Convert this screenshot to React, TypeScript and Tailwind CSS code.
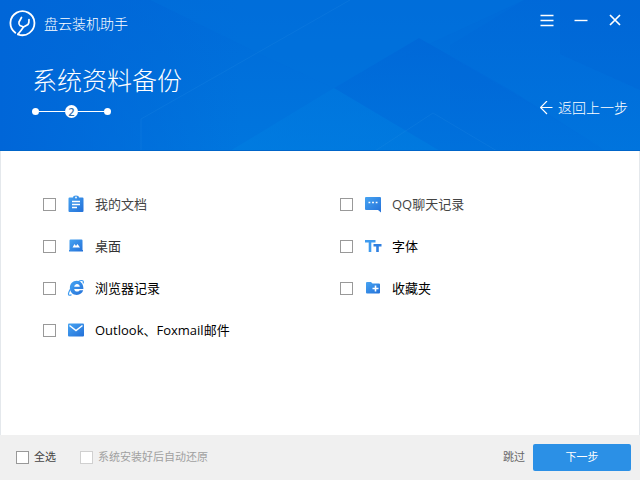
import React, { useState } from 'react';

type IconProps = { children: React.ReactNode };

const Glyph: React.FC<IconProps> = ({ children }) => (
  <svg width="18" height="18" viewBox="0 0 18 18" aria-hidden="true" className="shrink-0">
    {children}
  </svg>
);

const DocsIcon = () => (
  <Glyph>
    <path d="M2.500 2.500H6a3 2 0 0 1 6 0h3.500a1 1 0 0 1 1 1V16a1 1 0 0 1-1 1h-13a1 1 0 0 1-1-1V3.500a1 1 0 0 1 1-1z" fill="url(#blue)" />
    <circle cx="9" cy="2.500" r="0.900" fill="#fff" />
    <path d="M5 6.500h8M5 9.500h8M5 12.500h5" stroke="#fff" strokeWidth="1.500" />
  </Glyph>
);

const DesktopIcon = () => (
  <Glyph>
    <path d="M3.500 2.500h11a1 1 0 0 1 1 1V13h.5v1.500H2V13h.5V3.500a1 1 0 0 1 1-1z" fill="url(#blue)" />
    <path d="M5.500 10.500l2-3.500 1.500 2 1.500-2 2.500 3.500z" fill="#fff" />
  </Glyph>
);

const BrowserIcon = () => (
  <Glyph>
    <path d="M9.700 1.800c4 0 6.800 3 6.700 8.200H7.200c.2 1.700 1.300 2.600 3 2.600 1.200 0 2-.5 2.500-1.300h3.500c-.9 2.800-3.200 4.600-6.300 4.600-4 0-7-2.800-7-7s2.800-7.100 6.800-7.100zM7.200 7.700h5.600c-.2-1.700-1.200-2.700-2.800-2.700S7.500 6 7.200 7.700z" fill="url(#blue)" />
    <path d="M4.500 15.700c-2.800 1.300-3.700 0-2.500-3C3.400 8.700 8.500 3.400 13 1.800c3-.9 3.800.4 3.200 2.600" fill="none" stroke="#3d9bf0" strokeWidth="1.200" />
  </Glyph>
);

const MailIcon = () => (
  <Glyph>
    <rect x="1" y="2.500" width="16" height="13" rx="1" fill="url(#blue)" />
    <path d="M2.500 4.500l6.500 5 6.500-5" fill="none" stroke="#fff" strokeWidth="1.500" />
  </Glyph>
);

const ChatIcon = () => (
  <Glyph>
    <path d="M2 2h14a1 1 0 0 1 1 1v14.500L14 15H2a1 1 0 0 1-1-1V3a1 1 0 0 1 1-1z" fill="url(#blue)" />
    <path d="M4.500 7.500h1.800M8.100 7.500h1.800M11.700 7.500h1.800" stroke="#fff" strokeWidth="1.600" />
  </Glyph>
);

const FontIcon = () => (
  <Glyph>
    <path d="M1 4.200h10.500M6 4.200V15" stroke="#3f9bef" strokeWidth="2.600" />
    <path d="M9.500 8.200h8M13.500 8.200V15" stroke="#2f7fe0" strokeWidth="2.600" />
  </Glyph>
);

const FavoriteIcon = () => (
  <Glyph>
    <path d="M3 3h4l1.500 1.500H15a1 1 0 0 1 1 1v8a1 1 0 0 1-1 1H3a1 1 0 0 1-1-1V4a1 1 0 0 1 1-1z" fill="url(#blue)" />
    <path d="M11.500 6.500v6M8.500 9.500h6" stroke="#fff" strokeWidth="1.600" />
  </Glyph>
);

const items = [
  { id: 'docs', label: '我的文档', Icon: DocsIcon, color: 'text-[#444]' },
  { id: 'qq', label: 'QQ聊天记录', Icon: ChatIcon, color: 'text-[#444]' },
  { id: 'desktop', label: '桌面', Icon: DesktopIcon, color: 'text-[#333]' },
  { id: 'fonts', label: '字体', Icon: FontIcon, color: 'text-black' },
  { id: 'browser', label: '浏览器记录', Icon: BrowserIcon, color: 'text-black' },
  { id: 'favorites', label: '收藏夹', Icon: FavoriteIcon, color: 'text-black' },
  { id: 'mail', label: 'Outlook、Foxmail邮件', Icon: MailIcon, color: 'text-black' },
];

const boxClass =
  'size-[13px] shrink-0 appearance-none border border-[#999] bg-white checked:bg-[#2b90e6] disabled:border-[#d0d0d0]';

// Faceted background of the header
const HeaderArt = () => (
  <svg
    className="absolute inset-0 h-full w-full"
    viewBox="0 0 640 151"
    preserveAspectRatio="none"
    aria-hidden="true"
  >
    <defs>
      <linearGradient id="base" x1="0" y1="0" x2="0" y2="1">
        <stop offset="0" stopColor="#006bd9" />
        <stop offset="1" stopColor="#0076de" />
      </linearGradient>
      <linearGradient id="left" x1="0" y1="0" x2="1" y2="0">
        <stop offset="0" stopColor="#0066d8" />
        <stop offset="1" stopColor="#0066d8" stopOpacity="0" />
      </linearGradient>
      <linearGradient id="dark" x1="0" y1="0" x2="0" y2="1">
        <stop offset="0" stopColor="#0065d7" />
        <stop offset="1" stopColor="#0070dc" />
      </linearGradient>
      <linearGradient id="glow" x1="1" y1="0" x2="0" y2="1">
        <stop offset="0" stopColor="#007adf" stopOpacity="0" />
        <stop offset="1" stopColor="#007ee1" />
      </linearGradient>
    </defs>
    <rect width="640" height="151" fill="url(#base)" />
    <rect width="240" height="151" fill="url(#left)" />
    <path d="M150 0h374L334 88l-74-34z" fill="#0074dd" opacity="0.4" />
    <path d="M230 151L334 88l85-50 95 56 92 57z" fill="url(#glow)" opacity="0.6" />
    <path d="M334 88L419 38l95 54 92 59H440z" fill="url(#dark)" opacity="0.7" />
    <path d="M450 45L524 0h116v151h-34L450 57z" fill="url(#dark)" opacity="0.35" />
    <path d="M450 57l80 46v48h-80z" fill="#0064d6" opacity="0.12" />
    <path d="M560 0h80v90l-80-36z" fill="#005fd3" opacity="0.2" />
    <path d="M141 151v-32L250 57 350 0M375 151l58-38 64 38" fill="none" stroke="#2a90e8" strokeOpacity="0.2" />
    <path d="M0 150.500h640" stroke="#0065c9" />
  </svg>
);

export default function App() {
  const [selected, setSelected] = useState<string[]>([]);

  const toggle = (id: string) =>
    setSelected((prev) => (prev.includes(id) ? prev.filter((x) => x !== id) : [...prev, id]));

  const allSelected = selected.length === items.length;

  return (
    <div className="flex min-h-screen flex-col bg-white font-['Open_Sans','Noto_Sans_CJK_SC',sans-serif]">
      {/* Shared icon gradient */}
      <svg width="0" height="0" className="absolute" aria-hidden="true">
        <defs>
          <linearGradient id="blue" x1="0" y1="0" x2="1" y2="1">
            <stop offset="0" stopColor="#47a4f2" />
            <stop offset="1" stopColor="#2370d8" />
          </linearGradient>
        </defs>
      </svg>

      {/* Header */}
      <header className="relative text-white">
        <HeaderArt />
        <div className="relative pb-[33px]">
          <div className="flex h-12 items-center justify-between pr-[18px] pl-2">
            <div className="flex items-center gap-2">
              <svg width="28" height="28" viewBox="0 0 28 28" fill="none" stroke="#fff" strokeLinecap="round" strokeLinejoin="round" aria-hidden="true">
                <path d="M7.300 22.800A12 12 0 1 1 10 24.300" strokeWidth="1.800" />
                <path d="M13.500 7.500L11 12q-.5 2.500 1 3.500l3.500 1.500L20 14.500q1.200-1.500 1-5M15.500 17L13 20.500l-3 3.800" strokeWidth="1.700" />
              </svg>
              <span className="text-sm font-light">盘云装机助手</span>
            </div>
            <div className="flex items-center gap-5 pb-2">
              <button type="button" aria-label="菜单">
                <svg width="14" height="14" viewBox="0 0 14 14" stroke="#fff" strokeWidth="1.400">
                  <path d="M0.500 2.500h13M0.500 7.500h13M0.500 12.500h13" />
                </svg>
              </button>
              <button type="button" aria-label="最小化">
                <svg width="14" height="14" viewBox="0 0 14 14" stroke="#fff" strokeWidth="1.400">
                  <path d="M0.500 7.500h13" />
                </svg>
              </button>
              <button type="button" aria-label="关闭">
                <svg width="14" height="14" viewBox="0 0 14 14" stroke="#fff" strokeWidth="1.700">
                  <path d="M2 2l10 10M12 2L2 12" />
                </svg>
              </button>
            </div>
          </div>

          <div className="flex items-end justify-between pt-4 pr-3 pl-8">
            <div>
              <h1 className="text-[25px] leading-8 font-light">系统资料备份</h1>
              <div className="mt-[9px] flex items-center">
                <span className="size-[7px] rounded-full bg-white" />
                <span className="h-px w-[26px] bg-white" />
                <span className="flex size-[13px] items-center justify-center rounded-full bg-white text-[11px] leading-3 font-semibold text-[#2d6fae]">
                  2
                </span>
                <span className="h-px w-[26px] bg-white" />
                <span className="size-[7px] rounded-full bg-white" />
              </div>
            </div>
            <button type="button" className="flex items-center gap-1 text-sm leading-5 font-light">
              <svg width="14" height="14" viewBox="0 0 14 14" fill="none" stroke="#fff" strokeWidth="1.200" aria-hidden="true">
                <path d="M7 0L0.500 6.500 7 13M0.500 6.500h12" />
              </svg>
              返回上一步
            </button>
          </div>
        </div>
      </header>

      {/* Backup items */}
      <main className="flex-1 border-x border-[#e4e8ec] pt-8">
        <div className="grid grid-cols-2 gap-x-10 px-[42px]">
          {items.map(({ id, label, Icon, color }) => (
            <label key={id} className="flex h-[42px] items-center">
              <input
                type="checkbox"
                className={boxClass}
                checked={selected.includes(id)}
                onChange={() => toggle(id)}
              />
              <span className="ml-[11px]">
                <Icon />
              </span>
              <span className={`ml-[10px] text-[13px] leading-5 ${color}`}>{label}</span>
            </label>
          ))}
        </div>
      </main>

      {/* Footer */}
      <footer className="flex h-[45px] items-center justify-between bg-[#f0f0f0] pr-[9px] pl-4 text-[11px]">
        <div className="flex items-center gap-6">
          <label className="flex items-center gap-[5px] text-[#444]">
            <input
              type="checkbox"
              className={boxClass}
              checked={allSelected}
              onChange={() => setSelected(allSelected ? [] : items.map((i) => i.id))}
            />
            全选
          </label>
          <label className="flex items-center gap-[5px] text-[#a0a0a0]">
            <input type="checkbox" className={boxClass} disabled />
            系统安装好后自动还原
          </label>
        </div>
        <div className="flex items-center gap-2">
          <button type="button" className="text-[#666]">
            跳过
          </button>
          <button type="button" className="h-[27px] w-[98px] rounded-[2px] bg-[#2b90e6] text-white">
            下一步
          </button>
        </div>
      </footer>
    </div>
  );
}
